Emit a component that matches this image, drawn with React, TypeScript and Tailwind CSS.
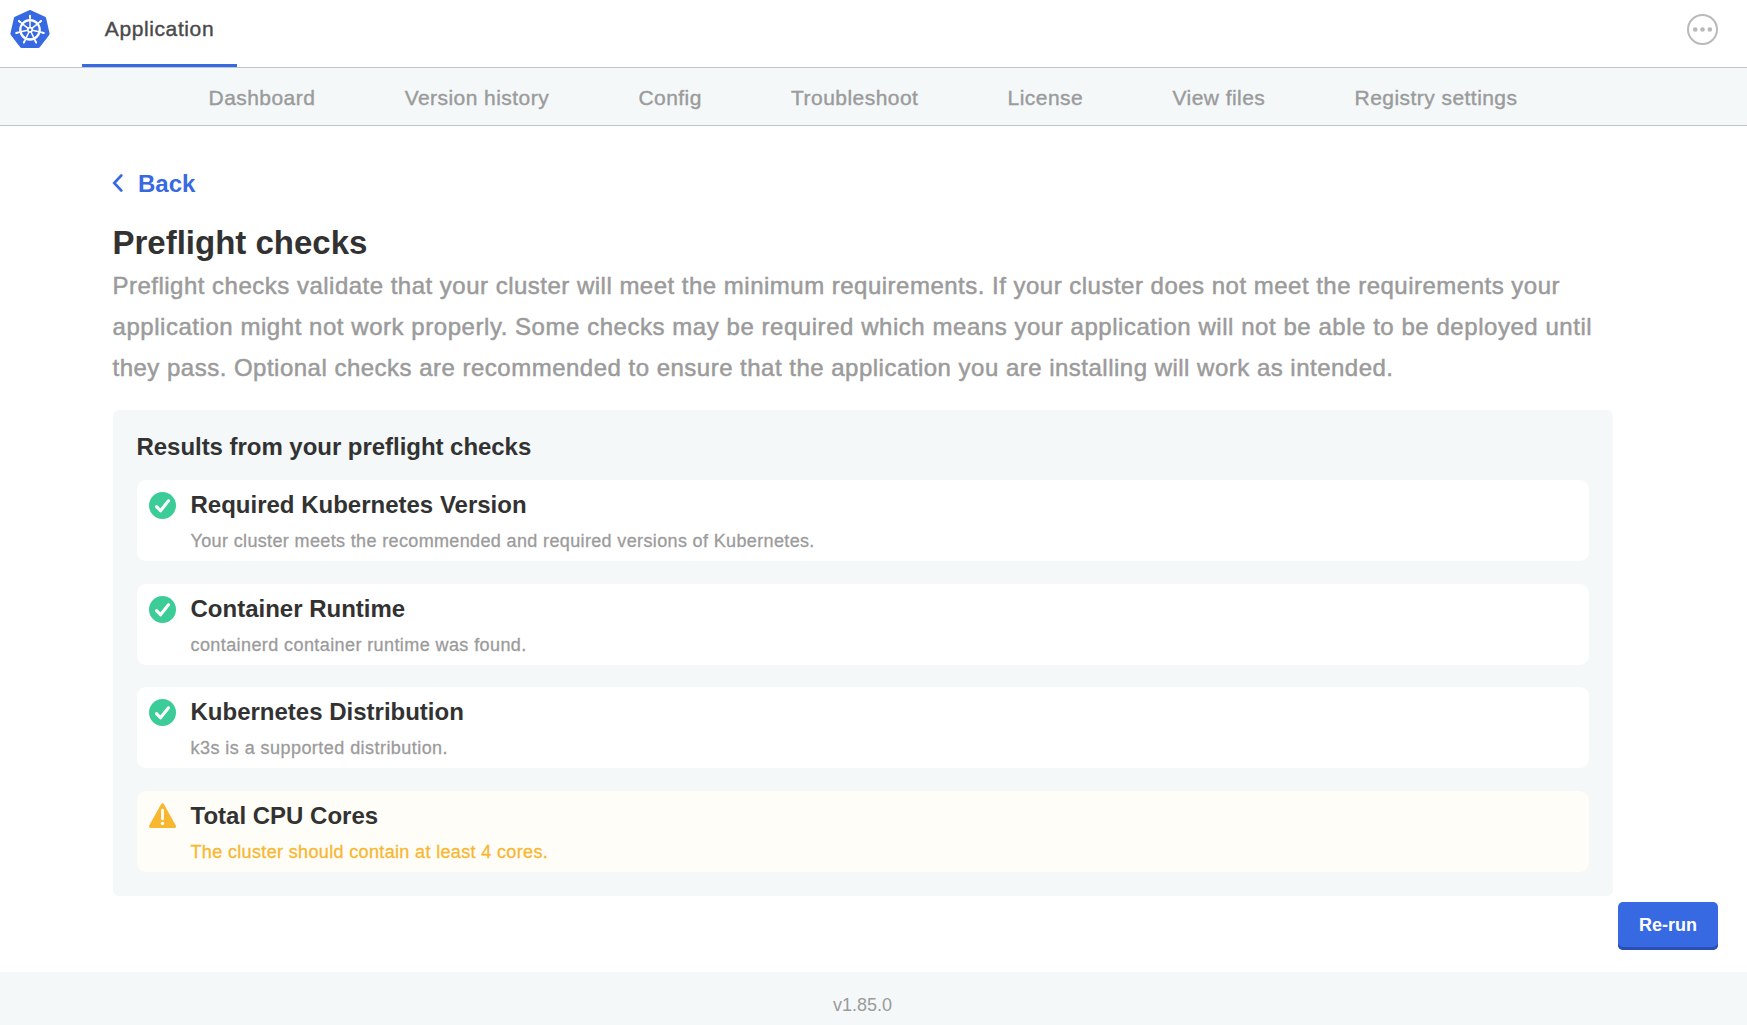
const navItems = ["Dashboard", "Version history", "Config", "Troubleshoot", "License", "View files", "Registry settings"];

type Check = { title: string; message: string; tracking: string; warn?: boolean };

const checks: Check[] = [
  { title: "Required Kubernetes Version", message: "Your cluster meets the recommended and required versions of Kubernetes.", tracking: "tracking-[0.36px]" },
  { title: "Container Runtime", message: "containerd container runtime was found.", tracking: "tracking-[0.41px]" },
  { title: "Kubernetes Distribution", message: "k3s is a supported distribution.", tracking: "tracking-[0.45px]" },
  { title: "Total CPU Cores", message: "The cluster should contain at least 4 cores.", tracking: "tracking-[0.35px]", warn: true },
];

const spokes = [0, 1, 2, 3, 4, 5, 6].map((i) => (i * 360) / 7);

function KubernetesLogo() {
  return (
    <svg className="mt-[9px]" width="40" height="40" viewBox="0 0 40 40" fill="none">
      <path
        d="M20 3L34.2 9.6L37.6 24.8L28.2 37H11.8L2.4 24.8L5.8 9.6Z"
        fill="#376ae2"
        stroke="#376ae2"
        strokeWidth="4"
        strokeLinejoin="round"
      />
      <g stroke="#fff" strokeLinecap="round">
        <circle cx="20" cy="20.8" r="9.7" strokeWidth="2.3" />
        {spokes.map((angle) => (
          <g key={angle} transform={`rotate(${angle} 20 20.8)`}>
            <path d="M20 18.4V7.2" strokeWidth="1.5" />
            <path d="M20 8.2V6.6" strokeWidth="1.9" />
          </g>
        ))}
        <circle cx="20" cy="20.8" r="2.2" strokeWidth="1.7" />
      </g>
    </svg>
  );
}

function PassIcon() {
  return (
    <svg width="27" height="27" viewBox="0 0 27 27" fill="none">
      <circle cx="13.5" cy="13.5" r="13.5" fill="#3ccc97" />
      <path d="M7.5 14.6l4 4.2L19.5 8.8" stroke="#fff" strokeWidth="3.1" strokeLinecap="round" strokeLinejoin="round" />
    </svg>
  );
}

function WarnIcon() {
  return (
    <svg width="27" height="25" viewBox="0 0 27 25" fill="none">
      <path d="M13.5 2L25.3 23.3H1.7Z" fill="#f7b731" stroke="#f7b731" strokeWidth="3.4" strokeLinejoin="round" />
      <path d="M13.5 7.2V15.8" stroke="#fff" strokeWidth="2.8" strokeLinecap="round" />
      <circle cx="13.5" cy="20.4" r="1.7" fill="#fff" />
    </svg>
  );
}

function CheckRow({ title, message, tracking, warn }: Check) {
  return (
    <div className={`flex h-[81px] rounded-[9px] pl-3 pt-3 ${warn ? "bg-[#fffdf7]" : "bg-white"}`}>
      <div className="w-[42px]">{warn ? <WarnIcon /> : <PassIcon />}</div>
      <div>
        <p className="text-[24px] leading-[26px] font-bold text-[#323232]">{title}</p>
        <p className={`mt-[10px] text-[18px] leading-[26px] [-webkit-text-stroke:0.3px] ${tracking} ${warn ? "text-[#f7b731]" : "text-[#9b9b9b]"}`}>
          {message}
        </p>
      </div>
    </div>
  );
}

export default function App() {
  return (
    <div className="flex h-[1025px] flex-col overflow-hidden bg-white font-['Liberation_Sans',Arial,sans-serif]">
      <header className="flex h-[68px] shrink-0 items-start border-b border-[#c0c5c8] pl-[9.5px] pr-[29px]">
        <KubernetesLogo />
        <div className="ml-[32.5px] h-[67px] w-[155px] border-b-[3px] border-[#376ae2] pt-4 text-center text-[21px] leading-[26px] tracking-[0.6px] text-[#4a4a4a] [-webkit-text-stroke:0.4px]">
          Application
        </div>
        <svg className="ml-auto mt-[14px]" width="31" height="31" viewBox="0 0 31 31" fill="#b9b9b9">
          <circle cx="15.5" cy="15.5" r="14.5" fill="none" stroke="#b9b9b9" strokeWidth="2" />
          <circle cx="8.2" cy="15.5" r="2.3" />
          <circle cx="15.5" cy="15.5" r="2.3" />
          <circle cx="22.8" cy="15.5" r="2.3" />
        </svg>
      </header>
      <nav className="flex h-[58px] shrink-0 justify-center gap-[89.3px] border-b border-[#c0c5c8] bg-[#f4f8f9] pr-[21px] pt-[17px] text-[21px] leading-[26px] tracking-[0.45px] text-[#9b9b9b] [-webkit-text-stroke:0.4px]">
        {navItems.map((item) => <span key={item}>{item}</span>)}
      </nav>
      <main className="ml-[112.5px] w-[1500.5px]">
        <div className="mt-[45px] flex h-[26px] items-center text-[24px] leading-[26px] font-bold text-[#376ae2]">
          <svg className="-mt-[3px] -ml-px mr-[15.5px]" width="11" height="18" viewBox="0 0 11 18" fill="none" stroke="#376ae2" strokeWidth="2.6" strokeLinecap="round">
            <path d="M9.3 1.5L2.2 9L9.3 16.5" />
          </svg>
          Back
        </div>
        <h1 className="mt-[26px] text-[33px] leading-10 font-bold text-[#323232]">Preflight checks</h1>
        <p className="mt-[2px] text-[24px] leading-[41px] whitespace-nowrap text-[#9b9b9b] [-webkit-text-stroke:0.5px]">
          <span className="tracking-[0.49px]">Preflight checks validate that your cluster will meet the minimum requirements. If your cluster does not meet the requirements your</span><br />
          <span className="tracking-[0.545px]">application might not work properly. Some checks may be required which means your application will not be able to be deployed until</span><br />
          <span className="tracking-[0.49px]">they pass. Optional checks are recommended to ensure that the application you are installing will work as intended.</span>
        </p>
        <section className="mt-[22px] h-[486px] rounded-md bg-[#f4f8f9] px-6 pt-[24px]">
          <h2 className="mb-[20px] text-[24px] leading-[26px] font-bold tracking-[-0.04px] text-[#323232]">Results from your preflight checks</h2>
          <div className="flex flex-col gap-[22.6px]">
            {checks.map((c) => <CheckRow key={c.title} {...c} />)}
          </div>
        </section>
      </main>
      <div className="mt-[6px] mr-[29px] flex justify-end">
        <button className="h-12 w-[100px] rounded-[5px] bg-[#376ae2] pb-px text-[18px] font-bold text-white shadow-[inset_0_-3px_0_#2a4fb3]">Re-run</button>
      </div>
      <footer className="mt-auto h-[53px] shrink-0 bg-[#f4f8f9] pr-[22px] pt-5 text-center text-[18px] leading-[26px] text-[#9b9b9b]">v1.85.0</footer>
    </div>
  );
}
